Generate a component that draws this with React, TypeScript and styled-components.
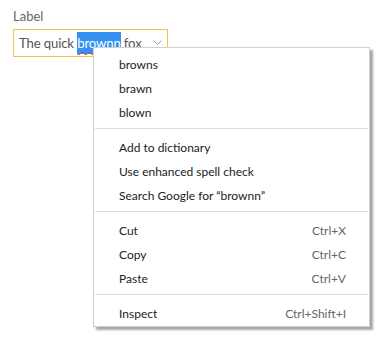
import React from "react";
import styled, { createGlobalStyle } from "styled-components";

const Global = createGlobalStyle`
  html, body { margin: 0; padding: 0; background: #ffffff; }
  body { font-family: "Lato", "Noto Sans", sans-serif; }
`;

const Page = styled.div`
  position: relative;
  width: 392px;
  height: 348px;
  padding: 8px 0 0 13px;
  box-sizing: border-box;
  display: flex;
  flex-direction: column;
  gap: 5px;
`;

const Label = styled.div`
  font-size: 13px;
  line-height: 16px;
  color: #666;
`;

const Field = styled.div`
  width: 155px;
  height: 28px;
  box-sizing: border-box;
  border: 1px solid #f3c14a;
  display: flex;
  align-items: center;
  padding: 0 5px 0 5px;
  font-size: 13.2px;
  letter-spacing: -0.15px;
  color: #555;
  white-space: nowrap;
`;

const Text = styled.span`
  flex: 1;
`;

const Selected = styled.span`
  background: #3392f2;
  color: #fff;
  padding: 3px 0 3px;
  text-decoration: underline wavy #e03030;
  text-decoration-thickness: 1px;
  text-underline-offset: 3px;
`;

const Chevron = styled.svg`
  width: 9px;
  height: 6px;
  flex: none;
`;

const Menu = styled.div`
  position: absolute;
  left: 93px;
  top: 47px;
  width: 277px;
  box-sizing: border-box;
  background: #fff;
  border: 1px solid #d0d0d0;
  box-shadow: 3px 3px 2px rgba(0, 0, 0, 0.35);
  padding: 4px 0 1px;
  display: flex;
  flex-direction: column;
`;

const Item = styled.div`
  height: 24px;
  display: flex;
  align-items: center;
  justify-content: space-between;
  padding: 0 23px 0 25px;
  font-size: 12px;
  color: #222;
`;

const Shortcut = styled.span`
  color: #666;
`;

const Separator = styled.div`
  height: 1px;
  background: #dadada;
  margin: 4px 1px 6px;
`;

type Entry = { label: string; shortcut?: string } | "sep";

const entries: Entry[] = [
  { label: "browns" },
  { label: "brawn" },
  { label: "blown" },
  "sep",
  { label: "Add to dictionary" },
  { label: "Use enhanced spell check" },
  { label: "Search Google for \u201cbrownn\u201d" },
  "sep",
  { label: "Cut", shortcut: "Ctrl+X" },
  { label: "Copy", shortcut: "Ctrl+C" },
  { label: "Paste", shortcut: "Ctrl+V" },
  "sep",
  { label: "Inspect", shortcut: "Ctrl+Shift+I" },
];

export default function App() {
  return (
    <Page>
      <Global />
      <Label>Label</Label>
      <Field>
        <Text>
          The quick <Selected>brownn</Selected> fox
        </Text>
        <Chevron viewBox="0 0 9 6">
          <path d="M0.5 0.5 L4.5 4.5 L8.5 0.5" fill="none" stroke="#999" strokeWidth="1" />
        </Chevron>
      </Field>
      <Menu>
        {entries.map((e, i) =>
          e === "sep" ? (
            <Separator key={i} />
          ) : (
            <Item key={i}>
              <span>{e.label}</span>
              {e.shortcut && <Shortcut>{e.shortcut}</Shortcut>}
            </Item>
          )
        )}
      </Menu>
    </Page>
  );
}
